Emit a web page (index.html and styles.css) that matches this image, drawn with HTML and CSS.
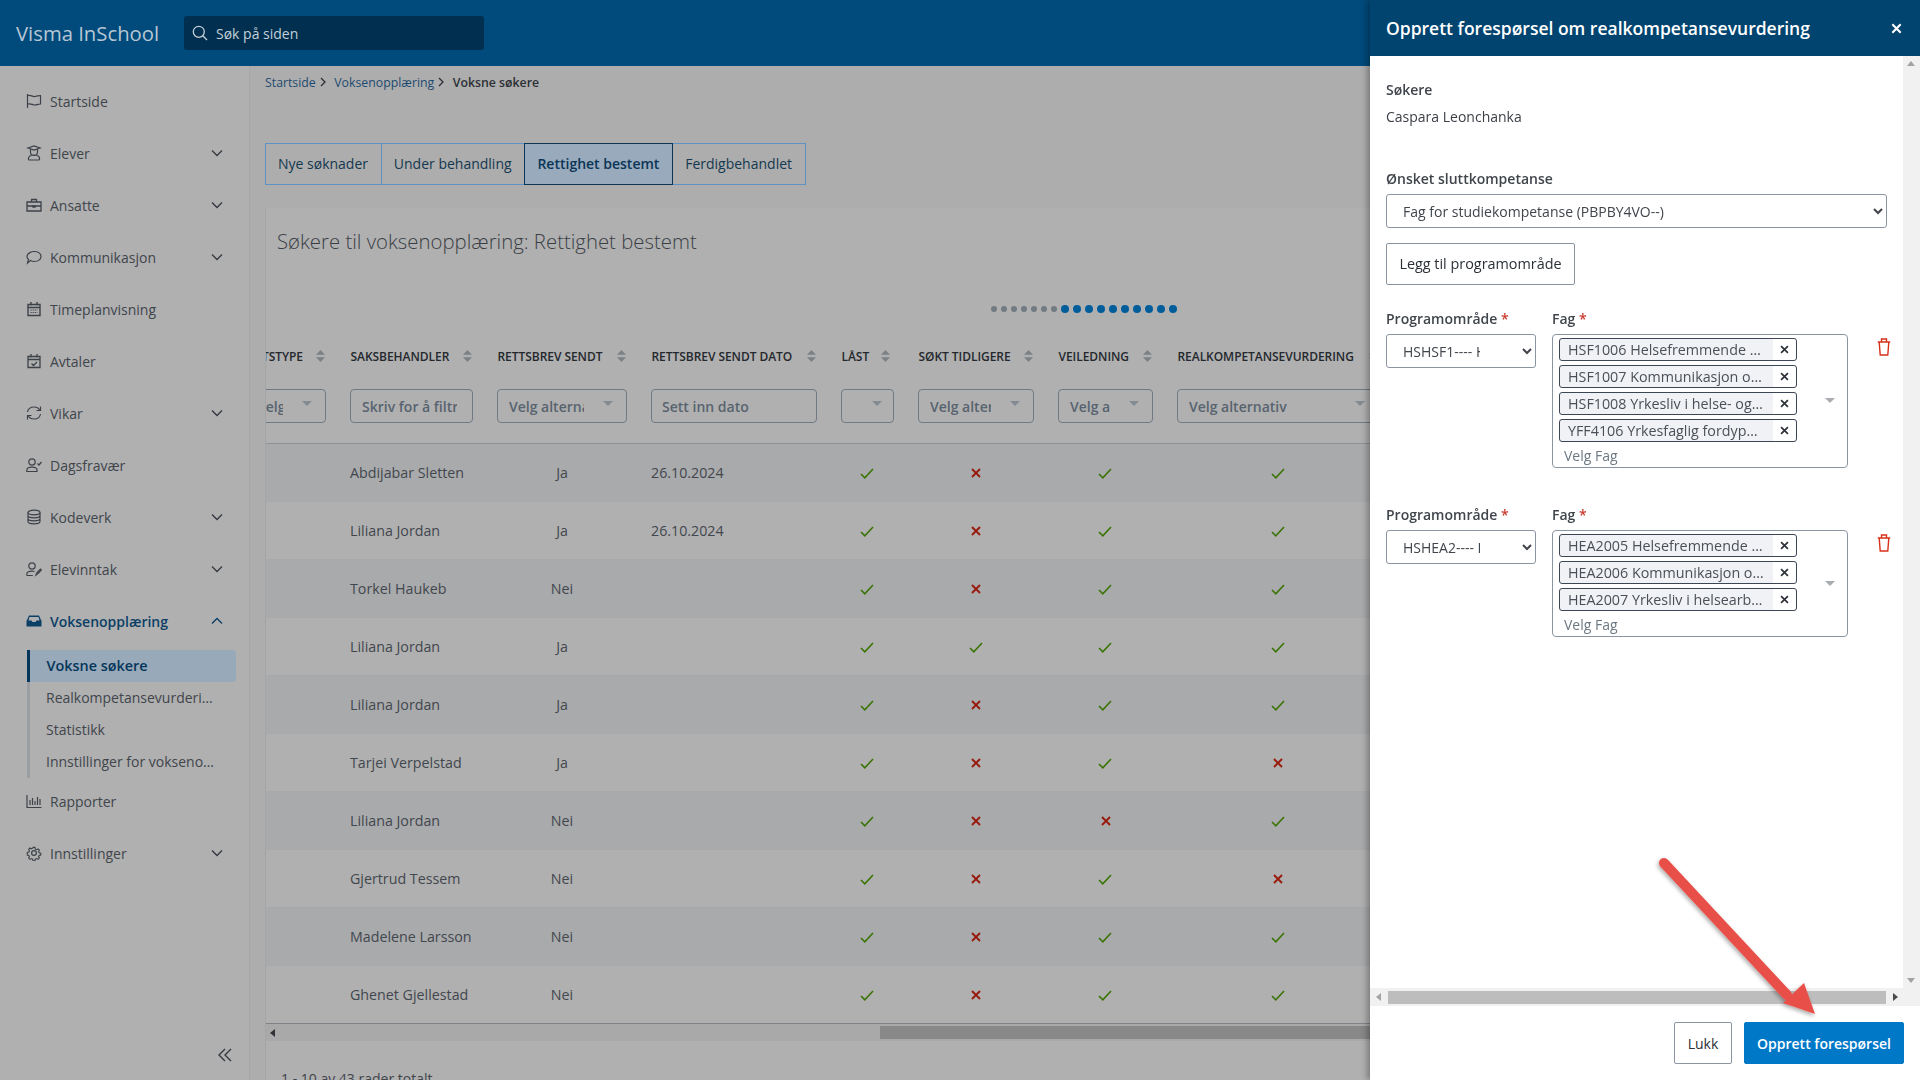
FILE: index.html
```html
<!DOCTYPE html>
<html lang="no">
<head>
<meta charset="utf-8">
<title>Visma InSchool</title>
<link rel="stylesheet" href="styles.css">
</head>
<body>
<svg class="sprite" aria-hidden="true">
  <symbol id="chev" viewBox="0 0 12 8"><path d="M1 1.5 6 6.5 11 1.5" fill="none" stroke="currentColor" stroke-width="1.3"/></symbol>
  <symbol id="sort" viewBox="0 0 9 12"><path d="M4.5 0 9 4.8H0zM4.5 12 0 7.2H9z" fill="#7c8186"/></symbol>
  <symbol id="ok" viewBox="0 0 14 11"><path d="M1 6 4.8 9.8 13 1" fill="none" stroke="#3a7405" stroke-width="1.6"/></symbol>
  <symbol id="no" viewBox="0 0 10 10"><path d="M1 1 9 9M9 1 1 9" fill="none" stroke="#981a0c" stroke-width="1.9"/></symbol>
  <symbol id="x" viewBox="0 0 10 10"><path d="M1.2 1.2 8.8 8.8M8.8 1.2 1.2 8.8" fill="none" stroke="currentColor" stroke-width="1.9"/></symbol>
  <symbol id="trash" viewBox="0 0 14 18"><path d="M.8 4H13.200M4.500 3.700V1H9.500V3.700M2.200 4 3.200 17H10.800L11.800 4" fill="none" stroke="#d6301c" stroke-width="1.400"/></symbol>
</svg>

<header class="topbar">
  <div class="brand">Visma InSchool</div>
  <div class="search">
    <svg class="search-icon" viewBox="0 0 16 16"><circle cx="6.800" cy="6.800" r="5.500" fill="none" stroke="#c4cfd8" stroke-width="1.300"/><path d="M10.800 10.800 15 15" stroke="#c4cfd8" stroke-width="1.300"/></svg>
    <span>Søk på siden</span>
  </div>
</header>

<div class="layout">
  <nav class="sidebar">
    <a class="nav-item"><svg class="ico" viewBox="0 0 16 16"><path d="M1.500 1v14M1.500 2.500C5 1.500 6 4 9 3.500s4-1 5.500-1v8.500c-2 0-3 .8-5.500 1s-4-2-7.500-1" fill="none" stroke="currentColor" stroke-width="1.200"/></svg><span>Startside</span></a>
    <a class="nav-item"><svg class="ico" viewBox="0 0 16 16"><path d="M2 3 8 1l6 2-6 2zM4.500 4.500V7a3.500 3.500 0 0 0 7 0V4.500M5.500 10h5M2.500 15v-1.500A3 3 0 0 1 5.500 10.500M13.500 15v-1.500a3 3 0 0 0-3-3M2.500 15h11" fill="none" stroke="currentColor" stroke-width="1.200"/></svg><span>Elever</span><svg class="chev"><use href="#chev"/></svg></a>
    <a class="nav-item"><svg class="ico" viewBox="0 0 16 16"><path d="M1 5h14v9H1zM5.500 5V2.500h5V5M1 9h14M7 8v2h2V8" fill="none" stroke="currentColor" stroke-width="1.300"/></svg><span>Ansatte</span><svg class="chev"><use href="#chev"/></svg></a>
    <a class="nav-item"><svg class="ico" viewBox="0 0 16 16"><path d="M8.500 2.500c3.500 0 6.500 2 6.500 5s-3 5-6.500 5c-1.500 0-3-.3-4-1L1.500 14l1-3.500C1.500 9.500 1 8.500 1 7.500c0-3 4-5 7.500-5z" fill="none" stroke="currentColor" stroke-width="1.200"/></svg><span>Kommunikasjon</span><svg class="chev"><use href="#chev"/></svg></a>
    <a class="nav-item"><svg class="ico" viewBox="0 0 16 16"><path d="M2 3.500h12v11H2zM2 6.500h12M5 1v3.500M11 1v3.500" fill="none" stroke="currentColor" stroke-width="1.400"/><path d="M4.500 9h7M4.500 11.500h7" stroke="currentColor" stroke-width="1.200" stroke-dasharray="1.200 .9"/></svg><span>Timeplanvisning</span></a>
    <a class="nav-item"><svg class="ico" viewBox="0 0 16 16"><path d="M2 3.500h12v11H2zM2 6.500h12M5 1v3.500M11 1v3.500M5.500 10.500l2 2 3.500-3.500" fill="none" stroke="currentColor" stroke-width="1.300"/></svg><span>Avtaler</span></a>
    <a class="nav-item"><svg class="ico" viewBox="0 0 16 16"><path d="M1.500 7C2 4 4.500 2 8 2c2.500 0 4.500 1 5.500 3M14.500 1.500v4h-4M14.500 9c-.5 3-3 5-6.500 5-2.500 0-4.500-1-5.500-3M1.500 14.500v-4h4" fill="none" stroke="currentColor" stroke-width="1.200"/></svg><span>Vikar</span><svg class="chev"><use href="#chev"/></svg></a>
    <a class="nav-item"><svg class="ico" viewBox="0 0 16 16"><circle cx="6" cy="5" r="3.200" fill="none" stroke="currentColor" stroke-width="1.200"/><path d="M.8 14.500v-1.300c0-2 2-3 5.200-3s5 1 5 3v1.300zM11.500 6.500l1.500 1.500 2.500-3" fill="none" stroke="currentColor" stroke-width="1.200"/></svg><span>Dagsfravær</span></a>
    <a class="nav-item"><svg class="ico" viewBox="0 0 16 16"><ellipse cx="8" cy="3.500" rx="6" ry="2.300" fill="none" stroke="currentColor" stroke-width="1.200"/><path d="M2 3.500v9c0 1.300 2.700 2.300 6 2.300s6-1 6-2.300v-9M2 6.500c0 1.300 2.700 2.300 6 2.300s6-1 6-2.300M2 9.500c0 1.300 2.700 2.300 6 2.300s6-1 6-2.300" fill="none" stroke="currentColor" stroke-width="1.200"/></svg><span>Kodeverk</span><svg class="chev"><use href="#chev"/></svg></a>
    <a class="nav-item"><svg class="ico" viewBox="0 0 16 16"><circle cx="6" cy="5" r="3.200" fill="none" stroke="currentColor" stroke-width="1.200"/><path d="M.8 14.500v-1.300c0-2 2-3 5.200-3 1 0 1.800.1 2.500.3M.8 14.500h6M10 14l1-2.500 3.500-3.500 1 1-3.500 3.500z" fill="none" stroke="currentColor" stroke-width="1.200"/></svg><span>Elevinntak</span><svg class="chev"><use href="#chev"/></svg></a>
    <a class="nav-item nav-open"><svg class="ico" viewBox="0 0 16 16"><path d="M3 2.500h10l2.500 5.500v5.500H.5V8zM3.500 8h9" fill="currentColor"/><path d="M3.500 4h9l1 3.500h-3l-1 1.500h-3l-1-1.500h-3z" fill="#b0b0b0"/></svg><span>Voksenopplæring</span><svg class="chev chev-up"><use href="#chev"/></svg></a>
    <div class="submenu">
      <a class="sub-item sub-active">Voksne søkere</a>
      <a class="sub-item">Realkompetansevurderinger</a>
      <a class="sub-item">Statistikk</a>
      <a class="sub-item">Innstillinger for voksenopplæring</a>
    </div>
    <a class="nav-item"><svg class="ico" viewBox="0 0 16 16"><path d="M1 2v12.500h14.500M4 12V7M6.500 12V5M9 12V8M11.500 12V4M14 12V6" fill="none" stroke="currentColor" stroke-width="1.200"/></svg><span>Rapporter</span></a>
    <a class="nav-item"><svg class="ico" viewBox="0 0 16 16"><circle cx="8" cy="8" r="2.400" fill="none" stroke="currentColor" stroke-width="1.200"/><path d="M6.800 1h2.400l.4 2 1.700.8 1.800-1 1.600 1.700-1 1.800.7 1.500 2 .4v2.400l-2 .4-.7 1.600 1 1.700-1.600 1.700-1.800-1-1.700.7-.4 2H6.800l-.4-2-1.700-.7-1.800 1-1.600-1.700 1-1.700-.7-1.600-2-.4V7.200l2-.4.7-1.500-1-1.800 1.600-1.700 1.800 1 1.700-.8z" transform="translate(1.600 1.600) scale(.8)" fill="none" stroke="currentColor" stroke-width="1.400"/></svg><span>Innstillinger</span><svg class="chev"><use href="#chev"/></svg></a>
    <svg class="collapse" viewBox="0 0 14 14"><path d="M7 1 1 7l6 6M13 1 7 7l6 6" fill="none" stroke="currentColor" stroke-width="1.400"/></svg>
  </nav>

  <main class="content">
    <div class="crumbs">
      <a>Startside</a><svg class="crumb-sep" viewBox="0 0 6 10"><path d="M1 1l4 4-4 4" fill="none" stroke="#2b2f35" stroke-width="1.300"/></svg>
      <a>Voksenopplæring</a><svg class="crumb-sep" viewBox="0 0 6 10"><path d="M1 1l4 4-4 4" fill="none" stroke="#2b2f35" stroke-width="1.300"/></svg>
      <strong>Voksne søkere</strong>
    </div>
    <div class="tabs">
      <div class="tab">Nye søknader</div>
      <div class="tab">Under behandling</div>
      <div class="tab tab-active">Rettighet bestemt</div>
      <div class="tab">Ferdigbehandlet</div>
    </div>
    <section class="card">
      <h1 class="card-title">Søkere til voksenopplæring: Rettighet bestemt</h1>
      <div class="dots">
        <i></i><i></i><i></i><i></i><i></i><i></i><i></i>
        <b></b><b></b><b></b><b></b><b></b><b></b><b></b><b></b><b></b><b></b>
      </div>
      <div class="table-clip">
        <table class="grid">
          <colgroup>
            <col class="c0"><col class="c1"><col class="c2"><col class="c3"><col class="c4"><col class="c5"><col class="c6"><col class="c7">
          </colgroup>
          <thead>
            <tr class="head">
              <th><div class="th-in th-first">RETTIGHETSTYPE<svg class="sort"><use href="#sort"/></svg></div></th>
              <th><div class="th-in">SAKSBEHANDLER<svg class="sort"><use href="#sort"/></svg></div></th>
              <th><div class="th-in">RETTSBREV SENDT<svg class="sort"><use href="#sort"/></svg></div></th>
              <th><div class="th-in">RETTSBREV SENDT DATO<svg class="sort"><use href="#sort"/></svg></div></th>
              <th class="th-locked"><div class="th-in">LÅST<svg class="sort"><use href="#sort"/></svg></div></th>
              <th><div class="th-in">SØKT TIDLIGERE<svg class="sort"><use href="#sort"/></svg></div></th>
              <th><div class="th-in">VEILEDNING<svg class="sort"><use href="#sort"/></svg></div></th>
              <th><div class="th-in">REALKOMPETANSEVURDERING<svg class="sort"><use href="#sort"/></svg></div></th>
            </tr>
            <tr class="filters">
              <td><div class="filter f-right"><span>Velg alternativ</span><u></u></div></td>
              <td><div class="filter f-text"><span>Skriv for å filtrere</span></div></td>
              <td><div class="filter"><span>Velg alternativ</span><u></u></div></td>
              <td><div class="filter f-date"><span>Sett inn dato</span></div></td>
              <td><div class="filter"><span></span><u></u></div></td>
              <td><div class="filter"><span>Velg alternativ</span><u></u></div></td>
              <td><div class="filter"><span>Velg alternativ</span><u></u></div></td>
              <td><div class="filter"><span>Velg alternativ</span><u></u></div></td>
            </tr>
          </thead>
          <tbody>
            <tr><td></td><td>Abdijabar Sletten</td><td class="ctr">Ja</td><td>26.10.2024</td><td class="ctr"><svg class="m-ok"><use href="#ok"/></svg></td><td class="ctr"><svg class="m-no"><use href="#no"/></svg></td><td class="ctr"><svg class="m-ok"><use href="#ok"/></svg></td><td class="ctr"><svg class="m-ok"><use href="#ok"/></svg></td></tr>
            <tr><td></td><td>Liliana Jordan</td><td class="ctr">Ja</td><td>26.10.2024</td><td class="ctr"><svg class="m-ok"><use href="#ok"/></svg></td><td class="ctr"><svg class="m-no"><use href="#no"/></svg></td><td class="ctr"><svg class="m-ok"><use href="#ok"/></svg></td><td class="ctr"><svg class="m-ok"><use href="#ok"/></svg></td></tr>
            <tr><td></td><td>Torkel Haukeb</td><td class="ctr">Nei</td><td></td><td class="ctr"><svg class="m-ok"><use href="#ok"/></svg></td><td class="ctr"><svg class="m-no"><use href="#no"/></svg></td><td class="ctr"><svg class="m-ok"><use href="#ok"/></svg></td><td class="ctr"><svg class="m-ok"><use href="#ok"/></svg></td></tr>
            <tr><td></td><td>Liliana Jordan</td><td class="ctr">Ja</td><td></td><td class="ctr"><svg class="m-ok"><use href="#ok"/></svg></td><td class="ctr"><svg class="m-ok"><use href="#ok"/></svg></td><td class="ctr"><svg class="m-ok"><use href="#ok"/></svg></td><td class="ctr"><svg class="m-ok"><use href="#ok"/></svg></td></tr>
            <tr><td></td><td>Liliana Jordan</td><td class="ctr">Ja</td><td></td><td class="ctr"><svg class="m-ok"><use href="#ok"/></svg></td><td class="ctr"><svg class="m-no"><use href="#no"/></svg></td><td class="ctr"><svg class="m-ok"><use href="#ok"/></svg></td><td class="ctr"><svg class="m-ok"><use href="#ok"/></svg></td></tr>
            <tr><td></td><td>Tarjei Verpelstad</td><td class="ctr">Ja</td><td></td><td class="ctr"><svg class="m-ok"><use href="#ok"/></svg></td><td class="ctr"><svg class="m-no"><use href="#no"/></svg></td><td class="ctr"><svg class="m-ok"><use href="#ok"/></svg></td><td class="ctr"><svg class="m-no"><use href="#no"/></svg></td></tr>
            <tr><td></td><td>Liliana Jordan</td><td class="ctr">Nei</td><td></td><td class="ctr"><svg class="m-ok"><use href="#ok"/></svg></td><td class="ctr"><svg class="m-no"><use href="#no"/></svg></td><td class="ctr"><svg class="m-no"><use href="#no"/></svg></td><td class="ctr"><svg class="m-ok"><use href="#ok"/></svg></td></tr>
            <tr><td></td><td>Gjertrud Tessem</td><td class="ctr">Nei</td><td></td><td class="ctr"><svg class="m-ok"><use href="#ok"/></svg></td><td class="ctr"><svg class="m-no"><use href="#no"/></svg></td><td class="ctr"><svg class="m-ok"><use href="#ok"/></svg></td><td class="ctr"><svg class="m-no"><use href="#no"/></svg></td></tr>
            <tr><td></td><td>Madelene Larsson</td><td class="ctr">Nei</td><td></td><td class="ctr"><svg class="m-ok"><use href="#ok"/></svg></td><td class="ctr"><svg class="m-no"><use href="#no"/></svg></td><td class="ctr"><svg class="m-ok"><use href="#ok"/></svg></td><td class="ctr"><svg class="m-ok"><use href="#ok"/></svg></td></tr>
            <tr><td></td><td>Ghenet Gjellestad</td><td class="ctr">Nei</td><td></td><td class="ctr"><svg class="m-ok"><use href="#ok"/></svg></td><td class="ctr"><svg class="m-no"><use href="#no"/></svg></td><td class="ctr"><svg class="m-ok"><use href="#ok"/></svg></td><td class="ctr"><svg class="m-ok"><use href="#ok"/></svg></td></tr>
          </tbody>
        </table>
      </div>
      <div class="hscroll"><em></em><span></span></div>
      <p class="total">1 - 10 av 43 rader totalt</p>
    </section>
  </main>
</div>

<aside class="panel">
  <div class="panel-head">
    <h2>Opprett forespørsel om realkompetansevurdering</h2>
    <svg class="panel-x"><use href="#x"/></svg>
  </div>
  <div class="panel-view">
    <div class="panel-body">
      <div class="label">Søkere</div>
      <div class="applicant">Caspara Leonchanka</div>
      <label class="label label-final">Ønsket sluttkompetanse</label>
      <select class="sel sel-wide"><option>Fag for studiekompetanse (PBPBY4VO--)</option></select>
      <button class="btn btn-add">Legg til programområde</button>

      <div class="prog">
        <div class="prog-l">
          <div class="label">Programområde <span class="req">*</span></div>
          <select class="sel sel-prog"><option>HSHSF1---- Helse- og oppvekstfag</option></select>
        </div>
        <div class="prog-r">
          <div class="label">Fag <span class="req">*</span></div>
          <div class="multi">
            <div class="chips">
              <div class="chip"><span>HSF1006 Helsefremmende arbeid</span><svg><use href="#x"/></svg></div>
              <div class="chip"><span>HSF1007 Kommunikasjon og samhandling</span><svg><use href="#x"/></svg></div>
              <div class="chip"><span>HSF1008 Yrkesliv i helse- og oppvekstfag</span><svg><use href="#x"/></svg></div>
              <div class="chip"><span>YFF4106 Yrkesfaglig fordypning</span><svg><use href="#x"/></svg></div>
              <div class="ph">Velg Fag</div>
            </div>
            <u class="tri"></u>
          </div>
        </div>
        <svg class="trash"><use href="#trash"/></svg>
      </div>

      <div class="prog prog-2">
        <div class="prog-l">
          <div class="label">Programområde <span class="req">*</span></div>
          <select class="sel sel-prog"><option>HSHEA2---- Helsearbeiderfag</option></select>
        </div>
        <div class="prog-r">
          <div class="label">Fag <span class="req">*</span></div>
          <div class="multi">
            <div class="chips">
              <div class="chip"><span>HEA2005 Helsefremmende arbeid</span><svg><use href="#x"/></svg></div>
              <div class="chip"><span>HEA2006 Kommunikasjon og samhandling</span><svg><use href="#x"/></svg></div>
              <div class="chip"><span>HEA2007 Yrkesliv i helsearbeiderfag</span><svg><use href="#x"/></svg></div>
              <div class="ph">Velg Fag</div>
            </div>
            <u class="tri"></u>
          </div>
        </div>
        <svg class="trash"><use href="#trash"/></svg>
      </div>
    </div>
    <div class="vscroll"><u class="arr-up"></u><u class="arr-down"></u></div>
  </div>
  <div class="panel-hscroll">
    <u class="arr-left"></u><span class="thumb"></span><u class="arr-right"></u><em></em>
  </div>
  <div class="panel-foot">
    <button class="btn btn-close">Lukk</button>
    <button class="btn btn-primary">Opprett forespørsel</button>
  </div>
</aside>

<svg class="arrow" viewBox="0 0 200 190">
  <defs><filter id="as" x="-20%" y="-20%" width="140%" height="140%"><feDropShadow dx="-1" dy="2" stdDeviation="2" flood-color="#000" flood-opacity=".35"/></filter></defs>
  <g filter="url(#as)">
    <path d="M14 13 137 145" stroke="#e8504a" stroke-width="10" stroke-linecap="round" fill="none"/>
    <path d="M154 133 165 164 133 153z" fill="#e8504a"/>
  </g>
</svg>
</body>
</html>
```

FILE: styles.css
```css
* { box-sizing: border-box; }
html, body { margin: 0; height: 1080px; overflow: hidden; }
body {
  font-family: "Open Sans", "Liberation Sans", sans-serif;
  font-size: 14px;
  color: #40454c;
  background: #adadad;
  display: flex;
  flex-direction: column;
}
.sprite { display: none; }

/* top bar */
.topbar {
  height: 66px;
  flex: none;
  background: #004a7c;
  display: flex;
  align-items: center;
  padding-left: 16px;
}
.brand { font-size: 20.300px; color: #b7c7d3; width: 168px; white-space: nowrap; }
.search {
  width: 300px;
  height: 34px;
  background: #002f4f;
  border-radius: 3px;
  display: flex;
  align-items: center;
  gap: 8px;
  padding-left: 8px;
  color: #c4cfd8;
  font-size: 14px;
}
.search-icon { width: 16px; height: 16px; }

.layout { flex: 1; display: flex; min-height: 0; }

/* sidebar */
.sidebar {
  width: 250px;
  flex: none;
  background: #b0b0b0;
  border-right: 1px solid #a7a7a7;
  padding-top: 9px;
  position: relative;
}
.nav-item {
  height: 52px;
  display: flex;
  align-items: center;
  padding-left: 26px;
  color: #40454c;
  font-size: 14px;
}
.ico { width: 16px; height: 16px; margin-right: 8px; flex: none; color: #3d4249; }
.chev { width: 12px; height: 8px; margin-left: auto; margin-right: 26px; color: #33383f; }
.chev-up { transform: rotate(180deg); }
.nav-open { color: #0b3f66; font-weight: 600; }
.nav-open .ico, .nav-open .chev { color: #0b3f66; }
.submenu {
  margin: 3px 13px -3px 27px;
  border-left: 3px solid #9a9ea3;
}
.sub-item {
  display: block;
  height: 32px;
  line-height: 32px;
  padding-left: 16px;
  padding-right: 20px;
  white-space: nowrap;
  overflow: hidden;
  text-overflow: ellipsis;
  color: #40454c;
}
.sub-active {
  background: #98a9ba;
  color: #04365a;
  font-weight: 600;
  font-size: 14.400px;
  margin-left: -3px;
  padding-left: 16.500px;
  border-left: 3px solid #04365a;
  border-radius: 0 3px 3px 0;
}
.collapse { position: absolute; right: 17px; top: 982px; width: 14px; height: 14px; color: #33383f; }

/* main */
.content { flex: 1; min-width: 0; padding-left: 15px; }
.crumbs {
  height: 32px;
  display: flex;
  align-items: center;
  font-size: 12.300px;
  color: #1d4b70;
}
.crumb-sep { width: 6px; height: 10px; margin: 0 8.500px 0 4px; }
.crumbs strong { font-weight: 600; color: #2b2f35; }
.tabs { display: flex; margin-top: 45px; height: 42px; }
.tab {
  height: 42px;
  line-height: 40px;
  padding: 0 12.800px 0 12px;
  border: 1px solid #5f92c4;
  margin-right: -1px;
  color: #14384f;
  font-size: 14px;
}
.tab-active {
  background: #98aabb;
  border: 1px solid #0b3557;
  color: #0b3557;
  font-weight: 600;
  position: relative;
}
.card {
  margin-top: 23px;
  background: #b0b0b0;
  border-left: 1px solid #a5a5a5;
  height: 900px;
}
.card-title {
  margin: 0;
  padding: 17.500px 0 0 11px;
  font-size: 20.350px;
  line-height: 30px;
  font-weight: 300;
  color: #3a3f46;
}
.dots {
  display: flex;
  align-items: center;
  height: 10px;
  margin: 48.500px 0 0 725px;
}
.dots i { width: 6px; height: 6px; border-radius: 50%; background: #727a82; margin-right: 4px; flex: none; }
.dots b { width: 8px; height: 8px; border-radius: 50%; background: #005d9c; margin-right: 4px; flex: none; }
.table-clip { margin-top: 23px; overflow: hidden; }
.grid { margin-left: -78px; border-collapse: separate; border-spacing: 0; table-layout: fixed; width: 1203px; }
.c0 { width: 150px; } .c1 { width: 147px; } .c2 { width: 154px; } .c3 { width: 190px; }
.c4 { width: 77px; } .c5 { width: 140px; } .c6 { width: 119px; } .c7 { width: 226px; }
.head th { height: 40px; padding: 0 13px 2px 12.500px; font-weight: 600; text-align: left; vertical-align: middle; }
.head .th-locked { padding-right: 16px; }
.th-in {
  display: flex;
  align-items: center;
  justify-content: space-between;
  white-space: nowrap;
  font-size: 12px;
  letter-spacing: -.05px;
  color: #24282d;
}
.th-first { justify-content: flex-end; gap: 13px; }
.sort { width: 9px; height: 12px; flex: none; }
.filters td { padding: 12px 12px 20px; border-bottom: 1px solid #8e9398; }
.filter {
  height: 34px;
  border: 1px solid #6f7a85;
  border-radius: 4px;
  display: flex;
  align-items: center;
  padding: 0 13px 0 11px;
  color: #57636f;
  font-weight: 600;
  font-size: 14px;
}
.f-right { width: 81px; margin-left: auto; }
.f-text { padding-right: 15px; }
.f-date { padding-left: 10px; }
.filter span { flex: 1; min-width: 0; overflow: hidden; white-space: nowrap; }
.filter u {
  width: 0; height: 0; flex: none; margin: -6px 0 0 19px;
  border: 5px solid transparent; border-top: 5px solid #828a92; border-bottom: 0;
}
tbody td {
  height: 58px;
  padding: 0 12px;
  font-size: 14.250px;
  color: #42474e;
  border-bottom: 1px solid #a8a9aa;
  white-space: nowrap;
  overflow: hidden;
}
tbody tr:nth-child(odd) td { background: #a9aaac; }
.ctr { text-align: center; }
.m-ok { width: 14px; height: 11px; vertical-align: middle; margin-bottom: 2px; margin-right: 1px; }
.m-no { width: 10px; height: 10px; vertical-align: middle; margin-bottom: 2px; }
.hscroll {
  height: 18px;
  margin-top: -1px;
  border-top: 1px solid #7f8388;
  background: #a9a9a9;
  display: flex;
  align-items: center;
}
.hscroll em {
  width: 0; height: 0; margin-left: 4px;
  border: 4px solid transparent; border-right: 5px solid #2f3338; border-left: 0;
}
.hscroll span { flex: 1; height: 13px; margin-left: 605px; background: #888; }
.total { margin: 28px 0 0 15px; color: #40454c; line-height: 20px; }

/* side panel */
.panel {
  position: fixed;
  top: 0;
  right: 0;
  width: 550px;
  height: 1080px;
  background: #fff;
  box-shadow: -3px 0 6px rgba(0,0,0,.3);
  display: flex;
  flex-direction: column;
  color: #3c4148;
}
.panel-head {
  height: 56px;
  flex: none;
  background: #00446f;
  display: flex;
  align-items: center;
  justify-content: space-between;
  padding: 0 18px 0 16px;
  color: #fff;
}
.panel-head h2 { margin: 0; font-size: 17.500px; font-weight: 600; white-space: nowrap; }
.panel-x { width: 11px; height: 11px; color: #fff; }
.panel-view { flex: 1; display: flex; min-height: 0; }
.panel-body { flex: 1; padding: 23px 0 0 16px; }
.vscroll { width: 17px; background: #f1f1f1; position: relative; }
.arr-up, .arr-down { position: absolute; left: 4px; width: 0; height: 0; border: 4.500px solid transparent; }
.arr-up { top: 5px; border-top: 0; border-bottom: 5px solid #a3a3a3; }
.arr-down { bottom: 5px; border-bottom: 0; border-top: 5px solid #a3a3a3; }
.label { font-weight: 600; line-height: 22px; color: #40454c; display: block; }
.applicant { line-height: 22px; margin-top: 5px; }
.label-final { margin-top: 40px; }
.sel {
  display: block;
  height: 34px;
  border: 1px solid #8a95a2;
  border-radius: 3px;
  background-color: #fff;
  font: 14px "Open Sans", sans-serif;
  color: #40454c;
}
.sel-wide { width: 501px; margin-top: 4px; padding: 0 0 0 12px; }
.btn {
  font: 14px "Open Sans", sans-serif;
  border-radius: 2px;
  background: #fff;
  border: 1px solid #8a95a2;
  color: #2b3036;
}
.btn-add { display: block; width: 189px; height: 42px; margin-top: 15px; padding: 0 0 2px; font-weight: 500; font-size: 14.400px; }
.prog { display: flex; margin-top: 23px; align-items: flex-start; }
.prog-2 { margin-top: 36px; }
.prog-l { width: 150px; margin-right: 16px; }
.prog-l .label { margin-bottom: 4px; }
.sel-prog { width: 150px; padding: 0 39px 0 12px; }
.prog-r { width: 296px; }
.prog-r .label { margin-bottom: 4px; }
.req { color: #c9392c; }
.multi {
  border: 1px solid #8a95a2;
  border-radius: 4px;
  display: flex;
  align-items: center;
  padding: 3px 0 0 6px;
}
.chips { width: 238px; }
.chip {
  height: 23px;
  margin-bottom: 4px;
  border: 1px solid #3c4654;
  border-radius: 3px;
  display: flex;
  align-items: center;
  background: linear-gradient(90deg, #f0f2f5 213px, #fff 213px);
  padding-left: 8px;
  color: #4b5058;
  font-size: 14.300px;
}
.chip span { width: 198px; overflow: hidden; white-space: nowrap; text-overflow: ellipsis; }
.chip svg { width: 9px; height: 9px; margin-left: auto; margin-right: 7px; color: #2e333a; flex: none; }
.ph { color: #6c7883; line-height: 20px; padding-left: 5px; margin-bottom: 1px; }
.tri { width: 0; height: 0; margin: -4px 0 0 28px; border: 5px solid transparent; border-top: 5px solid #a9adb2; border-bottom: 0; }
.trash { width: 14px; height: 18px; margin: 30px 0 0 29px; flex: none; }
.panel-hscroll {
  height: 18px;
  flex: none;
  background: #f1f1f1;
  display: flex;
  align-items: center;
  position: relative;
}
.panel-hscroll .thumb { width: 498px; height: 13px; background: #bdbdbd; }
.panel-hscroll em { width: 17px; height: 18px; background: #f1f1f1; flex: none; margin-left: auto; }
.arr-left { width: 0; height: 0; margin: 0 7px 0 6px; border: 4.500px solid transparent; border-right: 5px solid #a3a3a3; border-left: 0; }
.arr-right { width: 0; height: 0; margin-left: 7px; border: 4.500px solid transparent; border-left: 5px solid #4b4b4b; border-right: 0; }
.panel-foot {
  height: 74px;
  flex: none;
  display: flex;
  justify-content: flex-end;
  gap: 12px;
  padding: 16px 16px 0 0;
}
.btn-close { width: 58px; height: 42px; font-weight: 500; padding: 0; }
.btn-primary { width: 160px; height: 42px; background: #0078c8; border-color: #0078c8; color: #fff; font-weight: 600; font-size: 14px; padding: 0; }

/* annotation */
.arrow { position: fixed; left: 1650px; top: 850px; width: 200px; height: 190px; pointer-events: none; }
```
